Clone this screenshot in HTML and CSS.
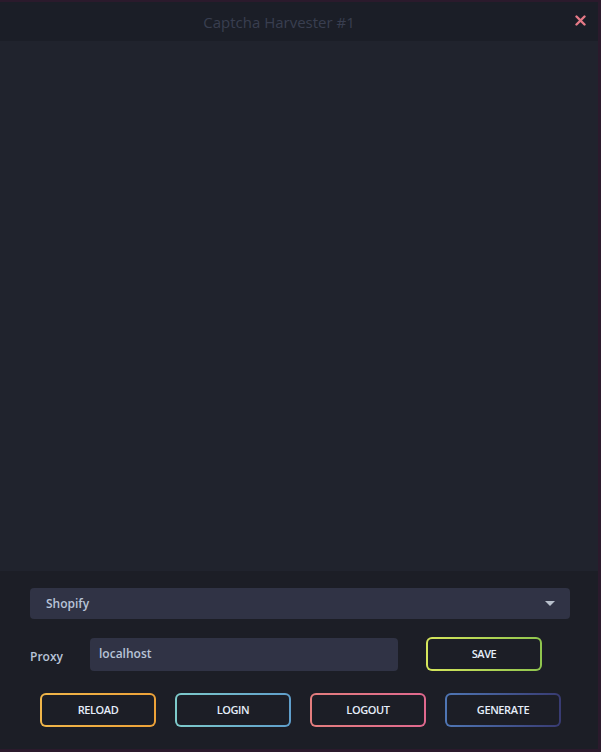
FILE: index.html
```html
<!DOCTYPE html>
<html>
<head>
    <title>Captcha Harvester #1</title>
    <link rel="stylesheet" href="styles.css">
</head>
<body>
    <div class="window">
        <div class="titlebar">
            <div class="title">Captcha Harvester #1</div>
            <div class="close-btn">
                <svg width="11" height="11" viewBox="0 0 11 11">
                    <path d="M1.5 1.5 L9.5 9.5 M9.5 1.5 L1.5 9.5" stroke="#e57a87" stroke-width="2.4" stroke-linecap="round"/>
                </svg>
            </div>
        </div>

        <div class="view"></div>

        <div class="panel">
            <div class="select">
                <span>Shopify</span>
                <span class="caret"></span>
            </div>

            <div class="proxy-row">
                <label class="proxy-label">Proxy</label>
                <div class="proxy-input">localhost</div>
                <button class="btn btn-save">SAVE</button>
            </div>

            <div class="button-row">
                <button class="btn btn-reload">RELOAD</button>
                <button class="btn btn-login">LOGIN</button>
                <button class="btn btn-logout">LOGOUT</button>
                <button class="btn btn-generate">GENERATE</button>
            </div>
        </div>
    </div>
</body>
</html>
```

FILE: styles.css
```css
body {
    margin: 0;
    background: #2b1a2c;
    font-family: "Open Sans", "Noto Sans", sans-serif;
}

.window {
    width: 598px;
    height: 747px;
    margin-top: 2px;
    display: flex;
    flex-direction: column;
    background: #20232d;
}

.titlebar {
    height: 39px;
    position: relative;
    display: flex;
    align-items: center;
    justify-content: center;
    background: #1b1e27;
}

.title {
    color: #393e50;
    font-size: 15px;
    margin-right: 40px;
}

.close-btn {
    position: absolute;
    right: 12px;
    top: 13px;
    width: 11px;
    height: 11px;
}

.close-btn svg {
    display: block;
}

.view {
    flex: 1;
    background: #20232d;
}

.panel {
    height: 178px;
    box-sizing: border-box;
    padding: 17px 28px 0 30px;
    background: #1c1e26;
}

.select {
    height: 31px;
    border-radius: 4px;
    background: #303345;
    display: flex;
    align-items: center;
    justify-content: space-between;
    padding: 0 15px 0 16px;
    color: #b8c4d8;
    font-size: 12px;
    font-weight: 600;
}

.caret {
    width: 0;
    height: 0;
    border-left: 5px solid transparent;
    border-right: 5px solid transparent;
    border-top: 5px solid #b8c0cc;
}

.proxy-row {
    display: flex;
    align-items: center;
    margin-top: 18px;
}

.proxy-label {
    width: 60px;
    color: #b8c4d8;
    font-size: 12px;
    font-weight: 600;
    padding-top: 5px;
}

.proxy-input {
    width: 308px;
    height: 33px;
    box-sizing: border-box;
    padding-left: 9px;
    padding-bottom: 1px;
    display: flex;
    align-items: center;
    border-radius: 4px;
    background: #303345;
    color: #b8c4d8;
    font-size: 12px;
    font-weight: 600;
}

.btn {
    width: 116px;
    height: 34px;
    box-sizing: border-box;
    border: 2px solid transparent;
    border-radius: 6px;
    color: #e6eefa;
    font-family: "Open Sans", "Noto Sans", sans-serif;
    font-size: 11px;
    font-weight: 600;
    letter-spacing: -0.4px;
    cursor: pointer;
    padding: 0 0 2px 0;
}

.btn-save {
    margin-left: 28px;
    background: linear-gradient(#1c1e26, #1c1e26) padding-box,
                linear-gradient(90deg, #d6e65c, #8fc54e) border-box;
}

.button-row {
    display: flex;
    gap: 19px;
    margin-top: 22px;
    padding-left: 10px;
}

.btn-reload {
    background: linear-gradient(#1c1e26, #1c1e26) padding-box,
                linear-gradient(90deg, #f0b64a, #eda238) border-box;
}

.btn-login {
    background: linear-gradient(#1c1e26, #1c1e26) padding-box,
                linear-gradient(90deg, #7ecbcb, #5f9ecb) border-box;
}

.btn-logout {
    background: linear-gradient(#1c1e26, #1c1e26) padding-box,
                linear-gradient(90deg, #e47e7e, #e0688e) border-box;
}

.btn-generate {
    background: linear-gradient(#1c1e26, #1c1e26) padding-box,
                linear-gradient(90deg, #4f76b4, #383b72) border-box;
}
```
